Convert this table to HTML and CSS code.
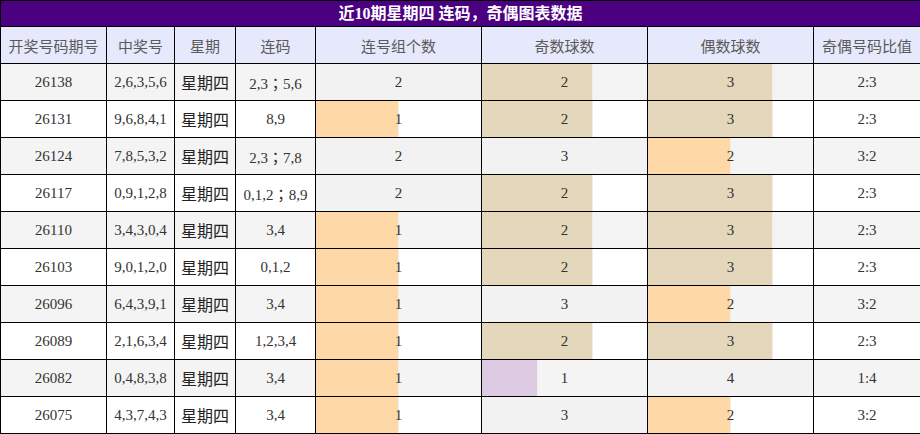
FILE: index.html
```html
<!DOCTYPE html>
<html lang="zh">
<head>
<meta charset="utf-8">
<title>近10期星期四 连码，奇偶图表数据</title>
<link rel="stylesheet" href="styles.css">
</head>
<body>
<table class="grid">
  <colgroup>
    <col class="c1"><col class="c2"><col class="c3"><col class="c4">
    <col class="c5"><col class="c6"><col class="c7"><col class="c8">
  </colgroup>
  <thead>
    <tr class="title"><th colspan="8">近10期星期四 连码，奇偶图表数据</th></tr>
    <tr class="head">
      <th>开奖号码期号</th><th>中奖号</th><th>星期</th><th>连码</th>
      <th>连号组个数</th><th>奇数球数</th><th>偶数球数</th><th>奇偶号码比值</th>
    </tr>
  </thead>
  <tbody>
    <tr class="alt"><td>26138</td><td>2,6,3,5,6</td><td class="wd">星期四</td><td>2,3<span class="cj">；</span>5,6</td>
      <td class="bar gray" style="--w:100%">2</td><td class="bar tan" style="--w:67.3%">2</td><td class="bar tan" style="--w:75.5%">3</td><td>2:3</td></tr>
    <tr><td>26131</td><td>9,6,8,4,1</td><td class="wd">星期四</td><td>8,9</td>
      <td class="bar orange" style="--w:50.5%">1</td><td class="bar tan" style="--w:67.3%">2</td><td class="bar tan" style="--w:75.5%">3</td><td>2:3</td></tr>
    <tr class="alt"><td>26124</td><td>7,8,5,3,2</td><td class="wd">星期四</td><td>2,3<span class="cj">；</span>7,8</td>
      <td class="bar gray" style="--w:100%">2</td><td class="bar gray" style="--w:100%">3</td><td class="bar orange" style="--w:50.5%">2</td><td>3:2</td></tr>
    <tr><td>26117</td><td>0,9,1,2,8</td><td class="wd">星期四</td><td>0,1,2<span class="cj">；</span>8,9</td>
      <td class="bar gray" style="--w:100%">2</td><td class="bar tan" style="--w:67.3%">2</td><td class="bar tan" style="--w:75.5%">3</td><td>2:3</td></tr>
    <tr class="alt"><td>26110</td><td>3,4,3,0,4</td><td class="wd">星期四</td><td>3,4</td>
      <td class="bar orange" style="--w:50.5%">1</td><td class="bar tan" style="--w:67.3%">2</td><td class="bar tan" style="--w:75.5%">3</td><td>2:3</td></tr>
    <tr><td>26103</td><td>9,0,1,2,0</td><td class="wd">星期四</td><td>0,1,2</td>
      <td class="bar orange" style="--w:50.5%">1</td><td class="bar tan" style="--w:67.3%">2</td><td class="bar tan" style="--w:75.5%">3</td><td>2:3</td></tr>
    <tr class="alt"><td>26096</td><td>6,4,3,9,1</td><td class="wd">星期四</td><td>3,4</td>
      <td class="bar orange" style="--w:50.5%">1</td><td class="bar gray" style="--w:100%">3</td><td class="bar orange" style="--w:50.5%">2</td><td>3:2</td></tr>
    <tr><td>26089</td><td>2,1,6,3,4</td><td class="wd">星期四</td><td>1,2,3,4</td>
      <td class="bar orange" style="--w:50.5%">1</td><td class="bar tan" style="--w:67.3%">2</td><td class="bar tan" style="--w:75.5%">3</td><td>2:3</td></tr>
    <tr class="alt"><td>26082</td><td>0,4,8,3,8</td><td class="wd">星期四</td><td>3,4</td>
      <td class="bar orange" style="--w:50.5%">1</td><td class="bar purple" style="--w:33.8%">1</td><td class="bar gray" style="--w:100%">4</td><td>1:4</td></tr>
    <tr><td>26075</td><td>4,3,7,4,3</td><td class="wd">星期四</td><td>3,4</td>
      <td class="bar orange" style="--w:50.5%">1</td><td class="bar gray" style="--w:100%">3</td><td class="bar orange" style="--w:50.5%">2</td><td>3:2</td></tr>
  </tbody>
</table>
</body>
</html>
```
FILE: styles.css
```css
html, body {
  margin: 0;
  padding: 0;
  background: #ffffff;
}

.grid {
  width: 920px;
  border-collapse: collapse;
  table-layout: fixed;
  font-family: "Liberation Serif", "Noto Sans CJK SC", serif;
  font-size: 15px;
  color: #333333;
}

.c1 { width: 106px; }
.c2 { width: 68px; }
.c3 { width: 61px; }
.c4 { width: 80px; }
.c5 { width: 166px; }
.c6 { width: 166px; }
.c7 { width: 166px; }
.c8 { width: 107px; }

.grid th,
.grid td {
  border: 1px solid #000000;
  padding: 0;
  text-align: center;
  vertical-align: middle;
  white-space: nowrap;
  overflow: hidden;
}

.title th {
  height: 25px;
  background: #4b0082;
  color: #ffffff;
  font-family: "Liberation Serif", "Noto Sans CJK SC", serif;
  font-weight: bold;
  font-size: 16px;
  line-height: 25px;
}

.head th {
  height: 36px;
  background: #e6e8fc;
  color: #5a5a5a;
  font-family: "Noto Sans CJK SC", sans-serif;
  font-weight: normal;
  font-size: 15px;
}

.grid td {
  height: 36px;
}

tr.alt td {
  background-color: #f4f4f4;
}

.wd {
  font-family: "Noto Sans CJK SC", sans-serif;
  font-size: 16px;
  color: #222222;
}

.cj {
  font-family: "Noto Sans CJK TC", sans-serif;
}

.bar {
  --c: #f2f2f2;
  background-image: linear-gradient(to right, var(--c) 0, var(--c) calc(var(--w) - 1px), #f3ece0 calc(var(--w) - 1px), #f3ece0 var(--w), transparent var(--w));
  background-repeat: no-repeat;
}

.bar.gray { --c: #f2f2f2; }
.bar.orange { --c: #fed8a6; }
.bar.tan { --c: #e4d7bc; }
.bar.purple { --c: #dccbe3; }

.bar.gray {
  background-image: linear-gradient(to right, #f2f2f2, #f2f2f2);
}
```
